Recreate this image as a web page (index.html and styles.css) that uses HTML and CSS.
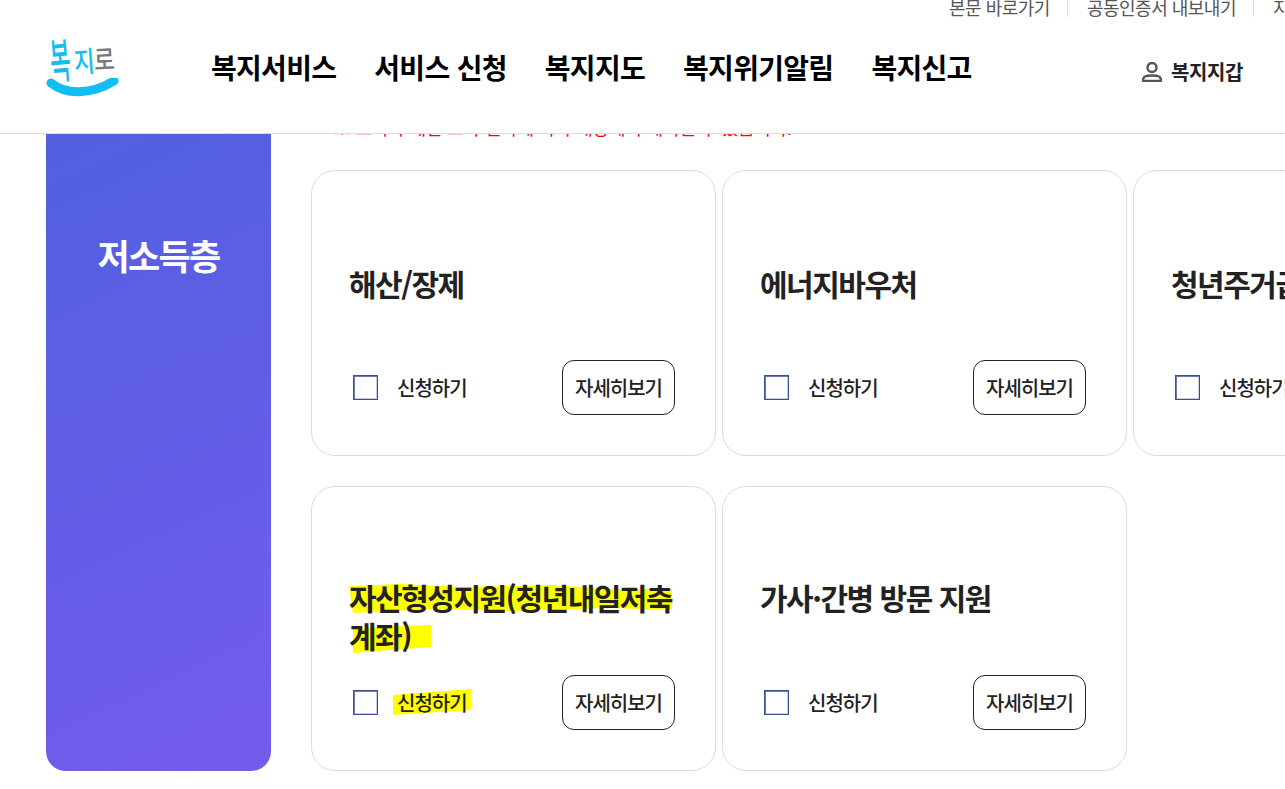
FILE: index.html
```html
<!DOCTYPE html>
<html lang="ko">
<head>
    <meta charset="UTF-8">
    <meta name="viewport" content="width=device-width, initial-scale=1.0">
    <title>복지로</title>
    <link rel="stylesheet" href="styles.css">
</head>
<body>

    <header class="site-header">
        <div class="util-links">
            <a class="util-link">본문 바로가기</a>
            <a class="util-link">공동인증서 내보내기</a>
            <a class="util-link">지역복지</a>
        </div>
        <div class="header-main">
            <a class="logo">
                <span class="logo-text">
                    <span class="logo-bok">복</span><span class="logo-ji">지</span><span class="logo-ro">로</span>
                </span>
                <svg class="logo-smile" width="76" height="22" viewBox="0 0 76 22">
                    <path d="M5 5 C20 17 45 17 68 3" fill="none" stroke="#12bdf4" stroke-width="9" stroke-linecap="round"/>
                </svg>
            </a>
            <nav class="gnb">
                <a>복지서비스</a>
                <a>서비스 신청</a>
                <a>복지지도</a>
                <a>복지위기알림</a>
                <a>복지신고</a>
            </nav>
            <a class="wallet">
                <svg width="20" height="20" viewBox="0 0 20 20">
                    <circle cx="10" cy="5.5" r="4.5" fill="none" stroke="#555" stroke-width="2.4"/>
                    <path d="M1.2 19 V17 C1.2 14.5 5 13.5 10 13.5 S18.8 14.5 18.8 17 V19 Z" fill="none" stroke="#555" stroke-width="2.4" stroke-linejoin="round"/>
                </svg>
                복지지갑
            </a>
        </div>
    </header>

    <main class="page">
        <aside class="side-panel">저소득층</aside>
        <section class="content">
            <p class="notice">※ 소득과 재산 조사 결과에 따라 대상에서 제외될 수 있습니다.</p>
            <div class="card-grid">
                <article class="card">
                    <h3 class="card-title">해산/장제</h3>
                    <div class="card-foot">
                        <label class="check"><span class="check-box"></span>신청하기</label>
                        <button class="detail-btn">자세히보기</button>
                    </div>
                </article>
                <article class="card">
                    <h3 class="card-title">에너지바우처</h3>
                    <div class="card-foot">
                        <label class="check"><span class="check-box"></span>신청하기</label>
                        <button class="detail-btn">자세히보기</button>
                    </div>
                </article>
                <article class="card">
                    <h3 class="card-title">청년주거급여</h3>
                    <div class="card-foot">
                        <label class="check"><span class="check-box"></span>신청하기</label>
                        <button class="detail-btn">자세히보기</button>
                    </div>
                </article>
                <article class="card card-low">
                    <svg class="marker" width="405" height="286" viewBox="0 0 405 286">
                        <polygon points="38,100 90,98 150,101 240,99 300,103 361,103 361,124 300,122 200,125 120,123 42,127" />
                        <polygon points="42,142 120,139 120,161 42,167" />
                        <polygon points="82,209 160,203 160,224 82,229" />
                    </svg>
                    <h3 class="card-title">자산형성지원(청년내일저축계좌)</h3>
                    <div class="card-foot">
                        <label class="check"><span class="check-box"></span>신청하기</label>
                        <button class="detail-btn">자세히보기</button>
                    </div>
                </article>
                <article class="card card-low">
                    <h3 class="card-title">가사·간병 방문 지원</h3>
                    <div class="card-foot">
                        <label class="check"><span class="check-box"></span>신청하기</label>
                        <button class="detail-btn">자세히보기</button>
                    </div>
                </article>
            </div>
        </section>
    </main>

</body>
</html>
```

FILE: styles.css
```css
* { margin: 0; padding: 0; box-sizing: border-box; font-family: "Noto Sans CJK KR", "Noto Sans", sans-serif; }
body { background: white; color: #222; overflow: hidden; height: 789px; }

/* header sits over the scrolled page */
.site-header { position: fixed; top: 0; left: 0; width: 100%; height: 134px; background: white; border-bottom: 1px solid #ddd; z-index: 10; overflow: hidden; }
.util-links { display: flex; height: 17px; padding-left: 949px; white-space: nowrap; }
.util-link { display: block; height: 17px; line-height: 14px; font-size: 18px; color: #555; padding-right: 17px; margin-right: 19px; border-right: 1px solid #ddd; letter-spacing: -0.5px; }
.util-link:last-child { border-right: none; }

.header-main { display: flex; align-items: flex-start; height: 116px; padding-left: 46px; }
.logo { display: block; width: 165px; flex: none; }
.logo-text { display: flex; height: 61px; padding-left: 3px; color: #12bdf4; font-weight: 500; line-height: 1; }
.logo-bok { display: block; font-size: 25px; width: 24px; margin-top: 31px; transform: rotate(-5deg) scale(0.9, 1.9); }
.logo-ji { display: block; font-size: 25px; width: 20px; margin-top: 31px; transform: rotate(-4deg) scale(0.9, 1.15); }
.logo-ro { display: block; font-size: 25px; width: 20px; margin-top: 29px; color: #77787c; transform: rotate(-3deg) scale(0.9, 1.1); }
.logo-smile { display: block; }

.gnb { display: flex; gap: 38px; width: 931px; flex: none; padding-top: 26px; }
.gnb a { font-size: 28px; line-height: 48px; font-weight: 700; color: #000; letter-spacing: -0.7px; white-space: nowrap; }
.wallet { display: flex; align-items: center; gap: 9px; font-size: 20px; font-weight: 700; color: #222; letter-spacing: -0.4px; white-space: nowrap; padding-top: 38px; line-height: 34px; }

.page { display: flex; gap: 40px; padding-left: 46px; padding-top: 100px; }
.side-panel { flex: none; width: 225px; height: 671px; padding-top: 131px; text-align: center; border-radius: 0 0 20px 20px; background: linear-gradient(155deg, #4f60de, #745bed); color: white; font-size: 35px; line-height: 48px; font-weight: 700; letter-spacing: -1.75px; }

.content { flex: none; width: 1100px; }
.notice { color: #f00; font-size: 18px; letter-spacing: -0.2px; line-height: 26px; height: 26px; margin-left: 22px; margin-top: 14px; margin-bottom: 30px; white-space: nowrap; }

.card-grid { display: grid; grid-template-columns: repeat(3, 405px); grid-auto-rows: 285.5px; column-gap: 6px; row-gap: 30px; }
.card { position: relative; display: flex; flex-direction: column; padding: 93px 38px 40px; border: 1px solid #ddd; border-radius: 24px; background: white; }
.card-low { padding-top: 91px; }
.marker { position: absolute; left: -1px; top: -1px; }
.marker polygon { fill: #ff0; }
.card-title { position: relative; font-size: 30px; line-height: 38px; font-weight: 700; letter-spacing: -1.5px; color: #222; word-break: break-all; margin-left: -1px; }
.card-foot { position: relative; margin-top: auto; display: flex; justify-content: space-between; align-items: center; padding-left: 3px; }
.check { display: flex; align-items: center; gap: 19px; font-size: 20px; font-weight: 500; letter-spacing: -1px; white-space: nowrap; }
.check-box { width: 25px; height: 25px; border: 1px solid #3a4f96; box-shadow: inset 1px 1px 0 #6a7ab4, inset -1px -1px 0 #c5cce3; background: white; }
.detail-btn { width: 113px; height: 55px; margin-right: 2px; background: white; border: 1px solid #222; border-radius: 12px; font-size: 20px; font-weight: 500; letter-spacing: -1px; color: #222; }
```
